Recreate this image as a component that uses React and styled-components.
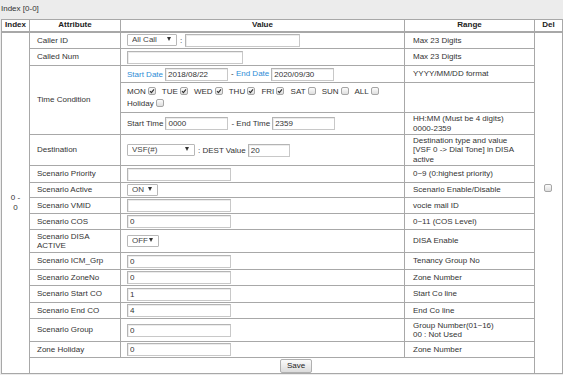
import React from "react";
import styled, { createGlobalStyle } from "styled-components";

const Global = createGlobalStyle`
  html, body { margin: 0; padding: 0; background: #ececec; }
  body { font-family: "Liberation Sans", Arial, sans-serif; font-size: 8px; color: #333; }
`;

const Page = styled.div`
  width: 563px;
  height: 375px;
  overflow: hidden;
  background: #ececec;
`;

const Title = styled.div`
  height: 19px;
  box-sizing: border-box;
  padding: 4px 0 0 1px;
  line-height: 10px;
  color: #333;
`;

const Table = styled.table`
  border-collapse: collapse;
  table-layout: fixed;
  width: 561px;
  margin-left: 1px;
  background: #fff;
`;

const Col = styled.col`
  width: ${(p) => p.$w}px;
`;

const Tr = styled.tr`
  height: ${(p) => p.$h}px;
`;

const Th = styled.th`
  border: 1px solid #a8a8a8;
  border-bottom: 2px solid #a8a8a8;
  font-weight: bold;
  text-align: center;
  padding: 0;
  color: #222;
  line-height: 10px;
`;

const Td = styled.td`
  border: 1px solid #a8a8a8;
  padding: 0 ${(p) => p.$px ?? 7}px;
  text-align: ${(p) => p.$align || "left"};
  vertical-align: middle;
  line-height: 9.3px;
  color: #333;
`;

const IndexCell = styled(Td)`
  text-align: center;
  padding: 0 8px;
`;

const DelCell = styled(Td)`
  text-align: center;
  padding: 0 0 28px 0;
`;

const Value = styled(Td)`
  padding: 0 4px 0 6px;
  line-height: 13px;
`;

const Input = styled.input`
  box-sizing: border-box;
  width: ${(p) => p.$w}px;
  height: 13px;
  margin: 0;
  padding: 0 2px;
  border: 1px solid #c8c8c8;
  border-top-color: #b4b4b4;
  border-left-color: #b4b4b4;
  box-shadow: inset 1px 1px 0 #ececec;
  font-family: inherit;
  font-size: 8px;
  color: #333;
  vertical-align: middle;
  background: #fff;
  outline: none;
`;

const SelectWrap = styled.span`
  position: relative;
  display: inline-block;
  vertical-align: middle;
  width: ${(p) => p.$w}px;
  height: 12px;
`;

const Select = styled.select`
  appearance: none;
  -webkit-appearance: none;
  box-sizing: border-box;
  width: 100%;
  height: 12px;
  margin: 0;
  padding: 0 0 0 4px;
  border: 1px solid #b8b8b8;
  border-radius: 1px;
  background: #fff;
  font-family: inherit;
  font-size: 8px;
  color: #444;
  line-height: 10px;
  display: block;
  outline: none;
`;

const Arrow = styled.span`
  position: absolute;
  right: 6px;
  top: 3px;
  width: 0;
  height: 0;
  border-left: 2.5px solid transparent;
  border-right: 2.5px solid transparent;
  border-top: 4px solid #333;
  pointer-events: none;
`;

const Label = styled.span`
  color: ${(p) => (p.$blue ? "#2d8cd6" : "#333")};
  margin: 0 ${(p) => p.$mr ?? 0}px 0 ${(p) => p.$ml ?? 0}px;
  vertical-align: middle;
`;

const Box = styled.span`
  display: inline-block;
  box-sizing: border-box;
  width: 8px;
  height: 8px;
  margin: 0 4px 0 2px;
  border: 1px solid #a6a6a6;
  border-radius: 2px;
  background: linear-gradient(#fcfcfc, #dedede);
  vertical-align: -1px;
  position: relative;
`;

const Tick = styled.svg`
  position: absolute;
  left: 0px;
  top: 0px;
  width: 6px;
  height: 6px;
`;

const Days = styled.div`
  line-height: 12px;
  padding: 1px 0;
`;

const Save = styled.button`
  box-sizing: border-box;
  width: 32px;
  height: 14px;
  padding: 0;
  margin: 0;
  border: 1px solid #b0b0b0;
  border-radius: 2px;
  background: linear-gradient(#fbfbfb, #dcdcdc);
  font-family: inherit;
  font-size: 8px;
  color: #222;
  vertical-align: middle;
`;

const SaveCell = styled(Td)`
  text-align: center;
  padding: 0;
`;

function Check({ on }) {
  return (
    <Box>
      {on && (
        <Tick viewBox="0 0 6 6">
          <path d="M1 3.2 L2.4 4.6 L5 1.4" fill="none" stroke="#333" strokeWidth="1.2" />
        </Tick>
      )}
    </Box>
  );
}

function Sel({ w, value }) {
  return (
    <SelectWrap $w={w}>
      <Select defaultValue={value}>
        <option>{value}</option>
      </Select>
      <Arrow />
    </SelectWrap>
  );
}

const simpleRows = [
  { h: 17, attr: "Scenario Priority", val: "", range: "0~9 (0:highest priority)" },
  { h: 15, attr: "Scenario Active", sel: ["ON", 31], range: "Scenario Enable/Disable" },
  { h: 16, attr: "Scenario VMID", val: "", range: "vocie mail ID" },
  { h: 16, attr: "Scenario COS", val: "0", range: "0~11 (COS Level)" },
  { h: 23, attr: "Scenario DISA ACTIVE", sel: ["OFF", 32], range: "DISA Enable" },
  { h: 17, attr: "Scenario ICM_Grp", val: "0", range: "Tenancy Group No" },
  { h: 16, attr: "Scenario ZoneNo", val: "0", range: "Zone Number" },
  { h: 17, attr: "Scenario Start CO", val: "1", range: "Start Co line" },
  { h: 16, attr: "Scenario End CO", val: "4", range: "End Co line" },
  { h: 23, attr: "Scenario Group", val: "0", range: ["Group Number(01~16)", "00 : Not Used"] },
  { h: 16, attr: "Zone Holiday", val: "0", range: "Zone Number" },
];

const days = [
  ["MON", true],
  ["TUE", true],
  ["WED", true],
  ["THU", true],
  ["FRI", true],
  ["SAT", false],
  ["SUN", false],
  ["ALL", false],
];

export default function App() {
  return (
    <Page>
      <Global />
      <Title>Index [0-0]</Title>
      <Table>
        <colgroup>
          <Col $w={28} />
          <Col $w={91} />
          <Col $w={284} />
          <Col $w={130} />
          <Col $w={28} />
        </colgroup>
        <thead>
          <Tr $h={12}>
            <Th>Index</Th>
            <Th>Attribute</Th>
            <Th>Value</Th>
            <Th>Range</Th>
            <Th>Del</Th>
          </Tr>
        </thead>
        <tbody>
          <Tr $h={17}>
            <IndexCell rowSpan={19}>0 - 0</IndexCell>
            <Td>Caller ID</Td>
            <Value>
              <Sel w={50} value="All Call" />
              <Label $ml={3} $mr={3}>:</Label>
              <Input $w={115} defaultValue="" />
            </Value>
            <Td $px={8}>Max 23 Digits</Td>
            <DelCell rowSpan={19}>
              <Check on={false} />
            </DelCell>
          </Tr>
          <Tr $h={17}>
            <Td>Called Num</Td>
            <Value>
              <Input $w={116} defaultValue="" />
            </Value>
            <Td $px={8}>Max 23 Digits</Td>
          </Tr>
          <Tr $h={17}>
            <Td rowSpan={3}>Time Condition</Td>
            <Value>
              <Label $blue $mr={2}>Start Date</Label>
              <Input $w={63} defaultValue="2018/08/22" />
              <Label $ml={3} $mr={2}>
                - <Label $blue>End Date</Label>
              </Label>
              <Input $w={63} defaultValue="2020/09/30" />
            </Value>
            <Td $px={8}>YYYY/MM/DD format</Td>
          </Tr>
          <Tr $h={30}>
            <Value>
              <Days>
                {days.map(([d, on]) => (
                  <React.Fragment key={d}>
                    {d}
                    <Check on={on} />{" "}
                  </React.Fragment>
                ))}
                Holiday
                <Check on={false} />
              </Days>
            </Value>
            <Td $px={8}></Td>
          </Tr>
          <Tr $h={22}>
            <Value>
              <Label $mr={2}>Start Time</Label>
              <Input $w={63} defaultValue="0000" />
              <Label $ml={3} $mr={2}>- End Time</Label>
              <Input $w={63} defaultValue="2359" />
            </Value>
            <Td $px={8}>
              HH:MM (Must be 4 digits)
              <br />
              0000-2359
            </Td>
          </Tr>
          <Tr $h={31}>
            <Td>Destination</Td>
            <Value>
              <Sel w={68} value="VSF(#)" />
              <Label $ml={3} $mr={2}>: DEST Value</Label>
              <Input $w={42} defaultValue="20" />
            </Value>
            <Td $px={8}>
              Destination type and value [VSF 0 -&gt; Dial Tone] in DISA active
            </Td>
          </Tr>
          {simpleRows.map((r) => (
            <Tr $h={r.h} key={r.attr}>
              <Td>{r.attr}</Td>
              <Value>
                {r.sel ? <Sel w={r.sel[1]} value={r.sel[0]} /> : <Input $w={104} defaultValue={r.val} />}
              </Value>
              <Td $px={8}>
                {Array.isArray(r.range) ? (
                  <>
                    {r.range[0]}
                    <br />
                    {r.range[1]}
                  </>
                ) : (
                  r.range
                )}
              </Td>
            </Tr>
          ))}
          <Tr $h={16}>
            <SaveCell colSpan={5}>
              <Save>Save</Save>
            </SaveCell>
          </Tr>
        </tbody>
      </Table>
    </Page>
  );
}
